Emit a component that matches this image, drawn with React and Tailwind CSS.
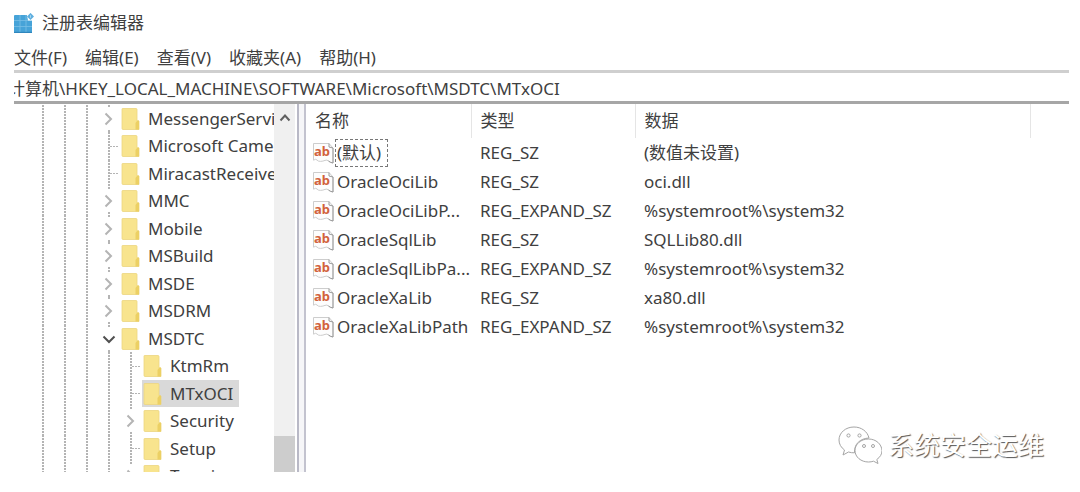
const FONT = "font-['Noto_Sans','Noto_Sans_CJK_SC',sans-serif]";

const MENUS = ['文件(F)', '编辑(E)', '查看(V)', '收藏夹(A)', '帮助(H)'];

const TREE = [
  { name: 'MessengerService', state: 'closed' },
  { name: 'Microsoft Camera' },
  { name: 'MiracastReceiver' },
  { name: 'MMC', state: 'closed' },
  { name: 'Mobile', state: 'closed' },
  { name: 'MSBuild', state: 'closed' },
  { name: 'MSDE', state: 'closed' },
  { name: 'MSDRM', state: 'closed' },
  { name: 'MSDTC', state: 'open' },
  { name: 'KtmRm', child: true },
  { name: 'MTxOCI', child: true, selected: true },
  { name: 'Security', child: true, state: 'closed' },
  { name: 'Setup', child: true },
  { name: 'Termi', child: true, state: 'closed' },
];

const VALUES = [
  ['(默认)', 'REG_SZ', '(数值未设置)'],
  ['OracleOciLib', 'REG_SZ', 'oci.dll'],
  ['OracleOciLibP...', 'REG_EXPAND_SZ', '%systemroot%\\system32'],
  ['OracleSqlLib', 'REG_SZ', 'SQLLib80.dll'],
  ['OracleSqlLibPa...', 'REG_EXPAND_SZ', '%systemroot%\\system32'],
  ['OracleXaLib', 'REG_SZ', 'xa80.dll'],
  ['OracleXaLibPath', 'REG_EXPAND_SZ', '%systemroot%\\system32'],
];

function RegistryIcon() {
  return (
    <svg className="size-5 shrink-0" viewBox="0 0 20 20" aria-hidden="true">
      <rect x="0" y="2" width="18" height="18" rx="1" fill="#46a3d8" />
      <path d="M0 7.500h18M0 13.500h18M6 2v18M12 2v18" stroke="#79bfe6" strokeWidth=".8" />
      <path d="M0 19.400h18" stroke="#2f86bd" strokeWidth="1.200" />
      <path d="M12.500 0H20v7.500h-6z" fill="#fff" />
      <path d="M16.500-.1 20 3.400 16.500 7 13 3.400z" fill="#5fafdf" />
      <path d="M16.500 2.200v2.600" stroke="#a9d6ef" />
    </svg>
  );
}

function Folder() {
  return (
    <svg className="h-[22px] w-[19px] shrink-0" viewBox="0 0 19 22" aria-hidden="true">
      <path d="M1.500.5H15a1 1 0 0 1 1 1V13h2v8.500H2a1 1 0 0 1-1-1V1a.5.5 0 0 1 .5-.5z" fill="#f8e48e" stroke="#ecd680" strokeWidth=".8" />
      <path d="M14.500 21.500V15l1.800-2.500H18v9z" fill="#ecd064" />
    </svg>
  );
}

function StringIcon() {
  return (
    <svg className="h-[22px] w-[22px] shrink-0" viewBox="0 0 22 22" aria-hidden="true">
      <path d="M.5 1.500h15.500l4 4.500v15q-3-.5-4.500-2t-3.500-.6-4.500 1-3.500-1.400-3.500.2z" fill="#fdfdfd" stroke="#cdcdcd" />
      <path d="M16 1.500v3.500l4 1V21q-3-.5-4.500-2" fill="none" stroke="#9a9a9a" />
      <text x="1" y="14" fontSize="13" fontWeight="700" fill="#d2623c" fontFamily="Noto Sans">ab</text>
    </svg>
  );
}

const DOTS_V = 'bg-[repeating-linear-gradient(to_bottom,#b4b4b4_0_2px,#ffffff_2px_3px)]';
const DOTS_H = 'bg-[repeating-linear-gradient(to_right,#b4b4b4_0_2px,#ffffff_2px_3px)]';

function Guide() {
  return (
    <span className="flex w-[22px] shrink-0 justify-center self-stretch">
      <span className={`w-0.5 ${DOTS_V}`} />
    </span>
  );
}

function Expander({ state, name }) {
  if (!state) {
    return (
      <span className="flex w-[22px] shrink-0 items-center self-stretch pl-[10px]">
        <span className={`w-0.5 self-stretch ${DOTS_V}`} />
        <span className={`h-px w-2 ${DOTS_H}`} />
      </span>
    );
  }
  const open = state === 'open';
  return (
    <button aria-label={name} aria-expanded={open} className="flex w-[22px] shrink-0 flex-col items-center self-stretch">
      <span className={`w-0.5 flex-1 ${DOTS_V}`} />
      <svg className="h-[22px] w-4" viewBox="0 0 16 22" fill="none" strokeWidth="2" aria-hidden="true">
        {open ? <path d="M2.500 8.500 8 14l5.500-5.500" stroke="#505050" /> : <path d="m4.500 5.500 5.500 5.500-5.500 5.500" stroke="#b4b4b4" />}
      </svg>
      <span className={`w-0.5 flex-1 ${DOTS_V}`} />
    </button>
  );
}

function Tree() {
  return (
    <ul className="min-w-0 flex-1 overflow-hidden pt-px pl-[18px]" aria-label="注册表项">
      {TREE.map((n) => (
        <li key={n.name} className="flex items-center whitespace-nowrap odd:h-[27px] even:h-7">
          <Guide />
          <Guide />
          <Guide />
          {n.child && <Guide />}
          <Expander state={n.state} name={n.name} />
          <span className={`flex shrink-0 items-center gap-2 self-stretch pr-[6px] pl-px ${n.selected ? 'bg-[#d9d9d9]' : ''}`}>
            <Folder />
            {n.name}
          </span>
        </li>
      ))}
    </ul>
  );
}

function ValueList() {
  return (
    <table className="w-full table-fixed text-left">
      <colgroup>
        <col className="w-[165px]" />
        <col className="w-[164px]" />
        <col className="w-[395px]" />
        <col />
      </colgroup>
      <thead>
        <tr className="h-[34px]">
          {['名称', '类型', '数据'].map((h) => (
            <th key={h} className="border-r border-[#e5e5e5] px-[9px] font-normal">{h}</th>
          ))}
          <td />
        </tr>
      </thead>
      <tbody>
        {VALUES.map(([name, type, data], i) => (
          <tr key={name} className="h-[29px] whitespace-nowrap">
            <td className="pl-[7px]">
              <div className="flex items-center">
                <StringIcon />
                <span className={`border border-dashed pl-px leading-[26px] ${i === 0 ? 'border-[#777] pr-[6px]' : 'border-transparent'}`}>{name}</span>
              </div>
            </td>
            <td className="pl-[9px]">{type}</td>
            <td className="pl-[9px]">{data}</td>
            <td />
          </tr>
        ))}
      </tbody>
    </table>
  );
}

function Watermark() {
  return (
    <div className="absolute right-9 bottom-7 flex items-center gap-[6px]">
      <svg className="h-[38px] w-11" viewBox="0 0 44 38" fill="#fff" stroke="#a5a5a5" strokeWidth="1" aria-hidden="true">
        <path d="M16 1C7.500 1 1 6.800 1 14c0 4 2 7.500 5.500 10L5 29l5.500-3c2 .6 4 .9 6 .8C16 18 22 12.500 31 12 29.500 5.500 23.500 1 16 1z" />
        <path d="M30.500 13C23 13 17 18 17 24.500S23 36 30.500 36c1.800 0 3.500-.3 5-.8L40 37.500l-1.200-4C42 31.300 44 28.200 44 24.500 43.500 18 38 13 30.500 13z" />
        <circle cx="10.500" cy="9.500" r="1.600" />
        <circle cx="21.500" cy="9.500" r="1.600" />
        <circle cx="26" cy="20" r="1.500" />
        <circle cx="35" cy="20" r="1.500" />
      </svg>
      <span className="text-[26px] leading-9 text-white [text-shadow:1px_1px_1px_#555]">系统安全运维</span>
    </div>
  );
}

export default function App() {
  return (
    <div className={`relative flex min-h-screen flex-col bg-white pr-[11px] pb-5 pl-[14px] text-[17px] leading-6 text-[#404040] ${FONT}`}>
      <header className="flex h-[46px] items-center gap-2">
        <RegistryIcon />
        <h1>注册表编辑器</h1>
      </header>
      <nav className="flex h-6 items-center gap-[18px]">
        {MENUS.map((m) => (
          <button key={m}>{m}</button>
        ))}
      </nav>
      <div className="flex overflow-hidden border-t-[3px] border-b-[3px] border-t-[#cfcfcf] border-b-[#a6a6a6]">
        <input
          aria-label="地址"
          className="-ml-[6px] block h-7 flex-1 outline-none"
          defaultValue="计算机\HKEY_LOCAL_MACHINE\SOFTWARE\Microsoft\MSDTC\MTxOCI"
        />
      </div>
      <main className="flex flex-1 bg-[#f6f6f8]">
        <section className="flex h-[368px] w-[285px] shrink-0 border-r-2 border-[#b9b9c6] bg-white">
          <Tree />
          <div className="mr-[2px] flex w-[21px] shrink-0 flex-col justify-between bg-[#f0f0f0]">
            <button aria-label="向上滚动" className="flex h-7 items-center justify-center">
              <svg className="h-3 w-3" viewBox="0 0 12 12" fill="none" stroke="#606060" strokeWidth="2" aria-hidden="true">
                <path d="m1.500 8.500 4.500-5 4.500 5" />
              </svg>
            </button>
            <div className="h-9 bg-[#cdcdcd]" />
          </div>
        </section>
        <section className="ml-[5px] min-w-0 flex-1 border-l-2 border-[#c3c3cf] bg-white">
          <ValueList />
        </section>
      </main>
      <Watermark />
    </div>
  );
}
